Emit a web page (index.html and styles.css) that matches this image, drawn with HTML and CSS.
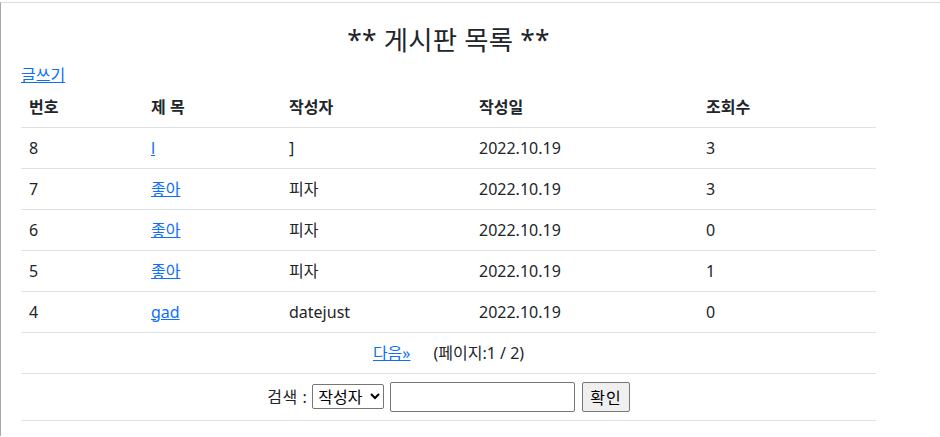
FILE: index.html
```html
<!DOCTYPE html>
<html lang="ko">
<head>
<meta charset="utf-8">
<title>게시판 목록</title>
<link rel="stylesheet" href="styles.css">
</head>
<body>
<div class="frame">
  <div class="container">
    <h3 class="title">** 게시판 목록 **</h3>
    <div class="write"><a href="#">글쓰기</a></div>
    <table class="board">
      <colgroup>
        <col class="c-no"><col class="c-title"><col class="c-writer"><col class="c-date"><col class="c-hit">
      </colgroup>
      <thead>
        <tr><th>번호</th><th>제 목</th><th>작성자</th><th>작성일</th><th>조회수</th></tr>
      </thead>
      <tbody>
        <tr><td>8</td><td><a href="#">l</a></td><td>]</td><td>2022.10.19</td><td>3</td></tr>
        <tr><td>7</td><td><a href="#">좋아</a></td><td>피자</td><td>2022.10.19</td><td>3</td></tr>
        <tr><td>6</td><td><a href="#">좋아</a></td><td>피자</td><td>2022.10.19</td><td>0</td></tr>
        <tr><td>5</td><td><a href="#">좋아</a></td><td>피자</td><td>2022.10.19</td><td>1</td></tr>
        <tr><td>4</td><td><a href="#">gad</a></td><td>datejust</td><td>2022.10.19</td><td>0</td></tr>
        <tr><td colspan="5" class="center"><a href="#">다음»</a><span class="pageinfo">(페이지:1 / 2)</span></td></tr>
        <tr>
          <td colspan="5" class="center search">
            <form class="search-form">
              <label>검색 :</label>
              <select class="sel"><option>작성자</option><option>제목</option></select>
              <input type="text" class="keyword">
              <button type="button" class="btn">확인</button>
            </form>
          </td>
        </tr>
      </tbody>
    </table>
  </div>
</div>
</body>
</html>
```

FILE: styles.css
```css
html, body {
  margin: 0;
  padding: 0;
  background: #fff;
}
body {
  font-family: "Segoe UI", "Noto Sans", "Noto Sans CJK KR", sans-serif;
  font-size: 16px;
  line-height: 1.5;
  color: #212529;
}
.frame {
  margin-top: 2px;
  border-top: 1px solid #dcdcdc;
  border-left: 1px solid #a8a8a8;
  height: 434px;
  box-sizing: border-box;
}
.container {
  padding-left: 20px;
  width: 855px;
}
.title {
  margin: 22px 0 6px;
  font-size: 26.4px;
  font-weight: 400;
  line-height: 1.2;
  text-align: center;
  letter-spacing: 0.2px;
}
.write {
  height: 24px;
}
a {
  color: #0d6efd;
  text-decoration: underline;
}
.board {
  width: 855px;
  border-collapse: collapse;
  table-layout: fixed;
}
.c-no { width: 122px; }
.c-title { width: 138px; }
.c-writer { width: 190px; }
.c-date { width: 227px; }
.c-hit { width: 178px; }
.board th, .board td {
  padding: 8px;
  border-bottom: 1px solid #dee2e6;
  text-align: left;
  vertical-align: top;
  white-space: nowrap;
}
.board th {
  font-weight: 700;
}
.board td.center {
  text-align: center;
}
.pageinfo {
  margin-left: 23px;
}
.search-form {
  margin: 0;
  display: inline-flex;
  align-items: center;
  gap: 5px;
}
.search-form label {
  margin-right: 0;
  letter-spacing: 0.5px;
}
.sel {
  font-family: inherit;
  font-size: 16px;
  line-height: 1.3;
  width: 72px;
  height: 25px;
  padding: 0 1px;
  border: 1px solid #767676;
  border-radius: 2px;
  background: #fff;
  color: #000;
}
.keyword {
  font-family: inherit;
  font-size: 16px;
  width: 185px;
  height: 30px;
  box-sizing: border-box;
  border: 1px solid #767676;
  border-radius: 2px;
  padding: 1px 2px;
  margin-left: 1px;
}
.btn {
  font-family: inherit;
  font-size: 16px;
  height: 30px;
  box-sizing: border-box;
  padding: 1px 7px;
  border: 1px solid #767676;
  border-radius: 2px;
  background: #efefef;
  color: #000;
  margin-left: 2px;
  letter-spacing: 1px;
}
```
